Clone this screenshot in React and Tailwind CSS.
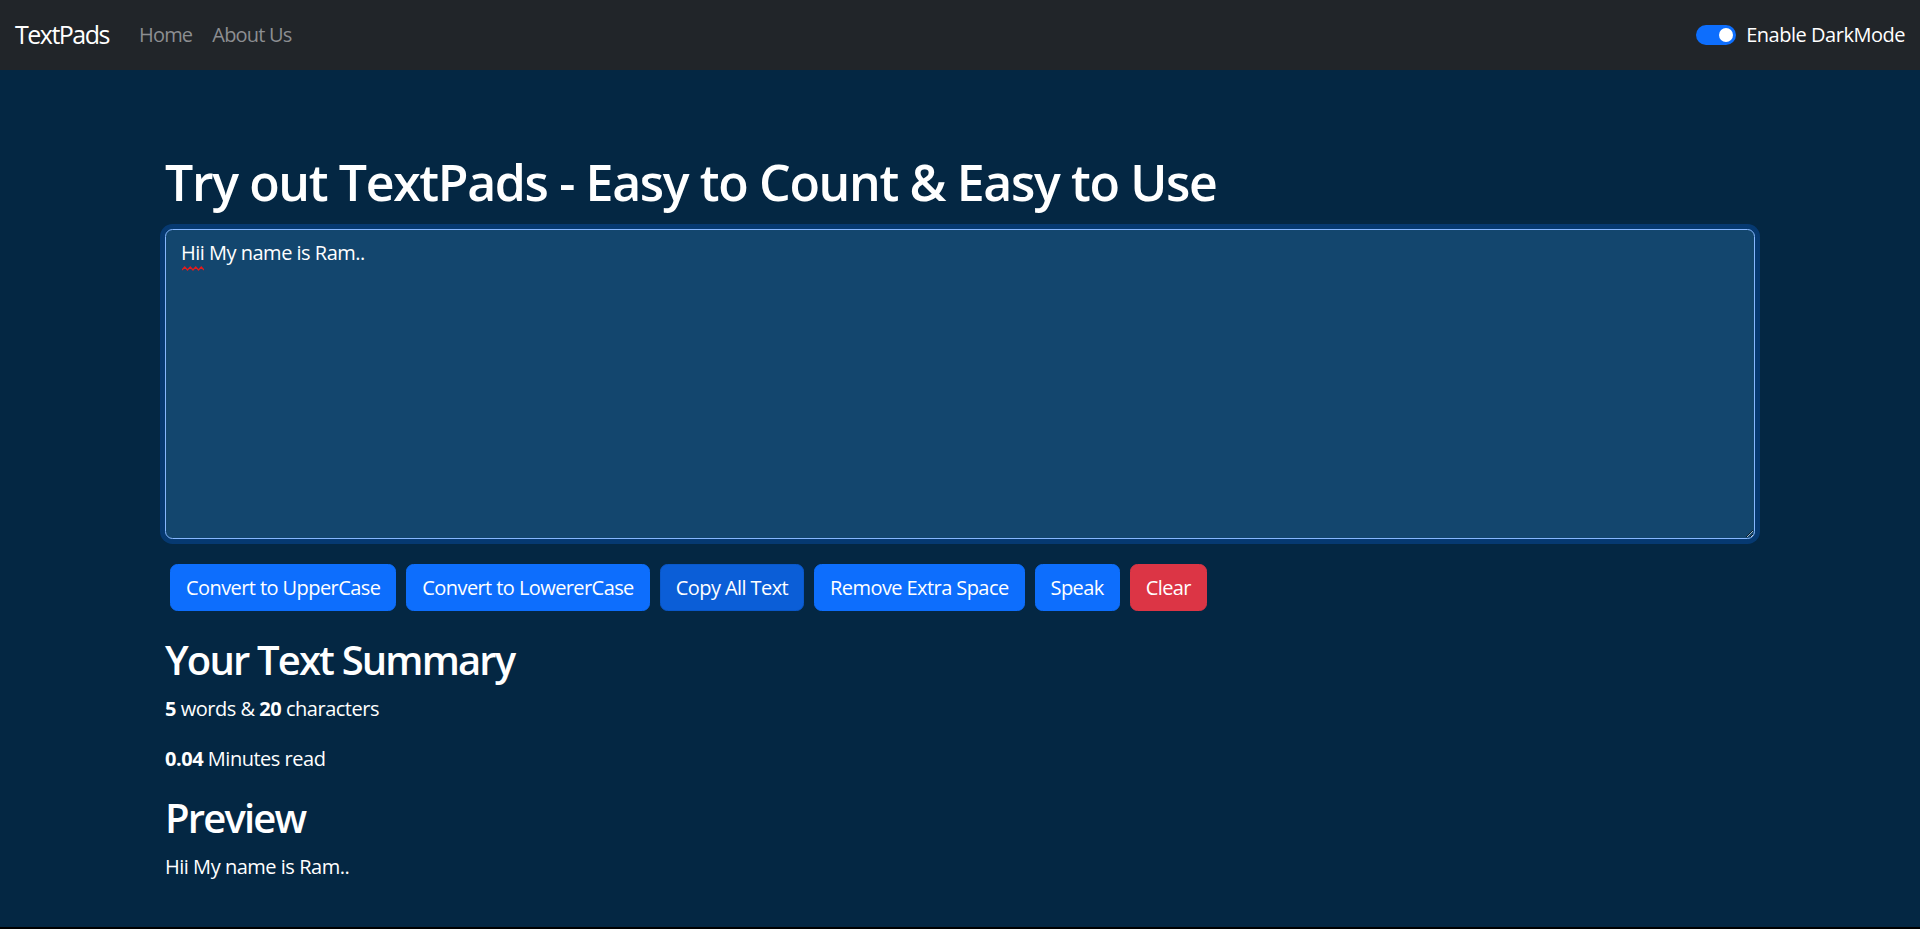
import React, { useState } from 'react';

const font = { fontFamily: '"Open Sans", "Noto Sans", sans-serif' };

const Navbar = ({ dark, setDark }) => (
    <nav className="h-[70px] bg-[#212529] flex items-center justify-between px-[15px]">
        <div className="flex items-center">
            <a href="#" className="text-[25px] leading-[37.5px] text-white mr-[20px] tracking-[-0.06em]">TextPads</a>
            <a href="#" className="text-[20px] px-[10px] text-[#8c8e91] tracking-[-0.04em]">Home</a>
            <a href="#" className="text-[20px] px-[10px] text-[#8c8e91] tracking-[-0.04em]">About Us</a>
        </div>
        <label className="flex items-center cursor-pointer">
            <button
                onClick={() => setDark(!dark)}
                className={`relative w-[40px] h-[20px] rounded-full mr-[10px] ${dark ? 'bg-[#0d6efd]' : 'bg-white border border-gray-400'}`}
            >
                <span className={`absolute top-[3px] w-[14px] h-[14px] rounded-full ${dark ? 'right-[3px] bg-white' : 'left-[3px] bg-gray-400'}`}></span>
            </button>
            <span className="text-[20px] text-white">Enable DarkMode</span>
        </label>
    </nav>
);

const App = () => {
    const [dark, setDark] = useState(true);
    const [text, setText] = useState('Hii My name is Ram..');

    const words = text.split(/\s+/).filter(w => w.length !== 0).length;

    const buttons = [
        { label: 'Convert to UpperCase', onClick: () => setText(text.toUpperCase()) },
        { label: 'Convert to LowererCase', onClick: () => setText(text.toLowerCase()) },
        { label: 'Copy All Text', onClick: () => navigator.clipboard?.writeText(text), active: true },
        { label: 'Remove Extra Space', onClick: () => setText(text.split(/[ ]+/).join(' ')) },
        { label: 'Speak', onClick: () => {} },
    ];

    return (
        <div className="h-[929px] bg-black tracking-[-0.03em]" style={font}>
            <div className="h-[927px] bg-[#042743] text-white">
                <Navbar dark={dark} setDark={setDark} />
                <div className="w-[1590px] mx-auto pt-[82px]">
                    <h1 className="text-[50px] leading-[60px] font-semibold tracking-[-0.027em] mb-[17px]">Try out TextPads - Easy to Count &amp; Easy to Use</h1>
                    <div className="relative mb-[20px]">
                        <textarea
                            value={text}
                            onChange={(e) => setText(e.target.value)}
                            spellCheck={false}
                            className="block w-full h-[310px] bg-[#13466e] text-white text-[20px] leading-[30px] px-[15px] py-[7.5px] rounded-[7.5px] border border-[#86b7fe] shadow-[0_0_0_5px_rgba(13,110,253,0.25)] outline-none resize-y tracking-[-0.025em]"
                        />
                        <svg className="absolute left-[17px] top-[37px]" width="22" height="5" viewBox="0 0 22 5">
                            <path d="M0 4 L2.75 1 L5.5 4 L8.25 1 L11 4 L13.75 1 L16.5 4 L19.25 1 L22 4" fill="none" stroke="#e11d1d" strokeWidth="1.3" />
                        </svg>
                    </div>
                    <div className="flex flex-wrap">
                        {buttons.map(b => (
                            <button
                                key={b.label}
                                onClick={b.onClick}
                                className={`m-[5px] px-[15px] py-[7.5px] text-[20px] leading-[30px] tracking-[-0.029em] text-white rounded-[7.5px] border ${b.active ? 'bg-[#0b5ed7] border-[#0a58ca]' : 'bg-[#0d6efd] border-[#0d6efd]'}`}
                            >
                                {b.label}
                            </button>
                        ))}
                        <button onClick={() => setText('')} className="m-[5px] px-[15px] py-[7.5px] text-[20px] leading-[30px] tracking-[-0.029em] text-white rounded-[7.5px] border bg-[#dc3545] border-[#dc3545]">Clear</button>
                    </div>
                    <div className="mt-[20px]">
                        <h2 className="text-[40px] leading-[48px] font-semibold tracking-[-0.046em] mb-[10px]">Your Text Summary</h2>
                        <p className="text-[20px] leading-[30px] mb-[20px]"><b>{words}</b> words &amp; <b>{text.length}</b> characters</p>
                        <p className="text-[20px] leading-[30px] mb-[20px]"><b>{(0.008 * words).toFixed(2)}</b> Minutes read</p>
                        <h2 className="text-[40px] leading-[48px] font-semibold tracking-[-0.046em] mb-[10px]">Preview</h2>
                        <p className="text-[20px] leading-[30px]">{text.length > 0 ? text : 'Nothing to preview!'}</p>
                    </div>
                </div>
            </div>
        </div>
    );
};

export default App;
